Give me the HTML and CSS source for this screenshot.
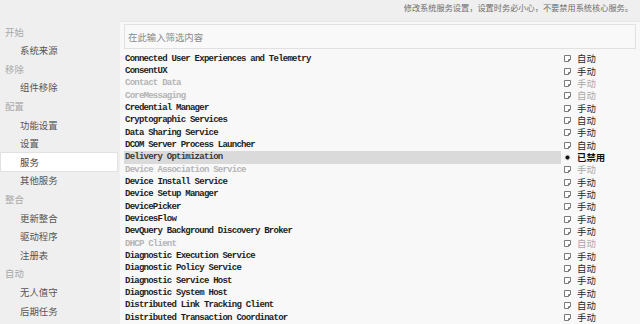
FILE: index.html
```html
<!DOCTYPE html>
<html>
<head>
<meta charset="utf-8">
<link rel="stylesheet" href="styles.css">
</head>
<body>
<div class="app">
  <nav class="sidebar">
    <div class="group">开始</div>
    <div class="item">系统来源</div>
    <div class="group">移除</div>
    <div class="item">组件移除</div>
    <div class="group">配置</div>
    <div class="item">功能设置</div>
    <div class="item">设置</div>
    <div class="item active">服务</div>
    <div class="item">其他服务</div>
    <div class="group">整合</div>
    <div class="item">更新整合</div>
    <div class="item">驱动程序</div>
    <div class="item">注册表</div>
    <div class="group">自动</div>
    <div class="item">无人值守</div>
    <div class="item">后期任务</div>
  </nav>
  <main class="main">
    <header class="hint">修改系统服务设置，设置时务必小心，不要禁用系统核心服务。</header>
    <section class="panel">
      <div class="search"><span class="placeholder">在此输入筛选内容</span></div>
      <div class="list" id="list"></div>
    </section>
  </main>
</div>
<script src="app.js"></script>
</body>
</html>
```
FILE: app.js
```js
var rows = [
  ["Connected User Experiences and Telemetry","自动",""],
  ["ConsentUX","手动",""],
  ["Contact Data","手动","off"],
  ["CoreMessaging","自动","off"],
  ["Credential Manager","手动",""],
  ["Cryptographic Services","自动",""],
  ["Data Sharing Service","手动",""],
  ["DCOM Server Process Launcher","自动",""],
  ["Delivery Optimization","已禁用","sel"],
  ["Device Association Service","手动","off"],
  ["Device Install Service","手动",""],
  ["Device Setup Manager","手动",""],
  ["DevicePicker","手动",""],
  ["DevicesFlow","手动",""],
  ["DevQuery Background Discovery Broker","手动",""],
  ["DHCP Client","自动","off"],
  ["Diagnostic Execution Service","手动",""],
  ["Diagnostic Policy Service","自动",""],
  ["Diagnostic Service Host","手动",""],
  ["Diagnostic System Host","手动",""],
  ["Distributed Link Tracking Client","自动",""],
  ["Distributed Transaction Coordinator","手动",""]
];
var box = '<svg class="cb" width="7" height="7" viewBox="0 0 7 7"><path d="M0.5 0.5H6.5V4.5L4.5 6.5H0.5Z" fill="#fff" stroke="#7a7a7a" stroke-width="1"/><path d="M4.5 6.5V4.5H6.5" fill="none" stroke="#7a7a7a" stroke-width="1"/></svg>';
var dot = '<svg class="cb" width="7" height="7" viewBox="0 0 7 7"><circle cx="3.5" cy="3.5" r="3" fill="#ddd"/><circle cx="3.5" cy="3.5" r="2" fill="#111"/></svg>';
var html = "";
rows.forEach(function (r) {
  html += '<div class="row ' + r[2] + '"><span class="name">' + r[0] + '</span><span class="state">' +
    (r[2] === "sel" ? dot : box) + '<span class="st">' + r[1] + '</span></span></div>';
});
document.getElementById("list").innerHTML = html;
```
FILE: styles.css
```css
html, body { margin: 0; padding: 0; }
body {
  width: 640px; height: 324px; overflow: hidden;
  background: #efefef;
  font-family: "Noto Sans CJK SC", "Noto Sans", sans-serif;
}
.app { display: flex; height: 324px; }
.sidebar {
  width: 120px; flex: none;
  padding-top: 22.7px;
  box-sizing: border-box;
}
.group, .item {
  height: 18.6px; line-height: 18.6px;
  font-size: 9.4px; white-space: nowrap;
}
.group { color: #a8a8a8; padding-left: 5px; }
.item { color: #555; padding-left: 20px; }
.item.active {
  background: #fff;
  margin-right: 3px;
  margin-left: 1px;
  padding-left: 19px;
  box-shadow: 0 0 0 1px #e2e2e2;
  color: #444;
}
.main { flex: 1; display: flex; flex-direction: column; min-width: 0; }
.hint {
  height: 25px; box-sizing: border-box;
  text-align: right; padding-right: 7px; padding-top: 1px;
  font-size: 8.2px; line-height: 12px; color: #6e6e6e;
  white-space: nowrap;
}
.panel {
  flex: 1; background: #f8f8f8;
  padding: 2px 4px 0 4px;
  border-top: 1px solid #e6e6e6;
}
.search {
  height: 23px; border: 1px solid #e1e1e1; background: #f9f9f9;
  display: flex; align-items: center; padding-left: 3px;
}
.placeholder { font-size: 9.4px; color: #8a8a8a; }
.list { padding-top: 3.5px; }
.row {
  display: flex; align-items: center;
  height: 12.33px;
}
.name {
  width: 437px; flex: none; height: 100%;
  padding-left: 1px; box-sizing: border-box;
  font-family: "Liberation Mono", monospace;
  font-weight: bold; font-size: 9px; letter-spacing: -0.76px;
  line-height: 12.33px; color: #1e1e1e; white-space: nowrap;
}
.state { display: flex; align-items: center; height: 100%; padding-left: 3px; }
.cb { flex: none; }
.st {
  margin-left: 6px; font-size: 9.4px; line-height: 11px; height: 11px; color: #2a2a2a;
}
.row.off .st { color: #a9a9a9; }
.row.off .name { color: #b4b4b4; }
.row.sel .name { background: #dadada; color: #3a3a3a; }
.row.sel .st { font-weight: bold; color: #111; }
```
